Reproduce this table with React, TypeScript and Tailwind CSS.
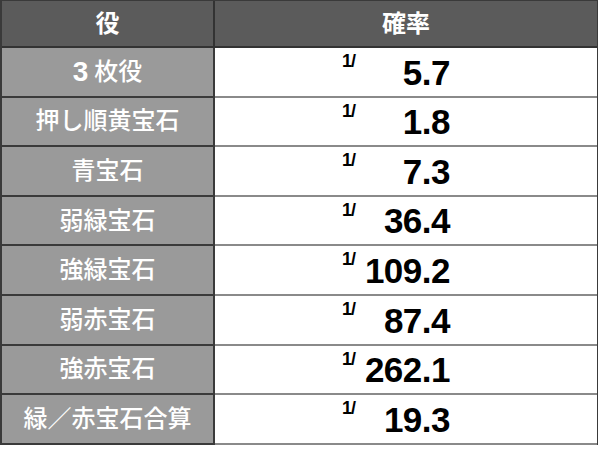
const rows: [string, string][] = [
  ["3 枚役", "5.7"],
  ["押し順黄宝石", "1.8"],
  ["青宝石", "7.3"],
  ["弱緑宝石", "36.4"],
  ["強緑宝石", "109.2"],
  ["弱赤宝石", "87.4"],
  ["強赤宝石", "262.1"],
  ["緑／赤宝石合算", "19.3"],
];

const jp = "font-['Liberation_Sans','Noto_Sans_CJK_JP',sans-serif]";

function Name({ text }: { text: string }) {
  // 先頭の数字だけ太字の欧文
  const m = text.match(/^(\d+)\s(.*)$/);
  if (!m) return <>{text}</>;
  return (
    <>
      <span className="font-bold text-[28px] mr-[6px]">{m[1]}</span>
      {m[2]}
    </>
  );
}

export default function App() {
  return (
    <div className="w-[600px] h-[455px] bg-white">
      <div className="w-[598px] border-l-2 border-r border-t border-[#3a3a3a]">
        <div className="flex h-[47px] bg-[#5b5b5b] border-b-2 border-[#333]">
          <div
            className={`w-[213px] border-r-2 border-[#333] flex items-center justify-center text-white text-[24px] font-bold ${jp}`}
          >
            役
          </div>
          <div
            className={`flex-1 flex items-center justify-center text-white text-[24px] font-bold ${jp}`}
          >
            確率
          </div>
        </div>
        {rows.map(([name, val]) => (
          <div key={name} className="flex h-[49.6px]">
            <div
              className={`w-[213px] bg-[#9a9a9a] border-r-2 border-b-2 border-[#3a3a3a] flex items-center justify-center text-white text-[24px] font-medium ${jp}`}
            >
              <Name text={name} />
            </div>
            <div className="flex-1 border-b-2 border-[#8a8a8a] pl-[127px]">
              <div className="w-[108px] h-full flex justify-between font-['Liberation_Sans',sans-serif] font-bold text-black">
                <span className="text-[18px] leading-none mt-[4px] tracking-[-1px]">1/</span>
                <span className="text-[35px] leading-none self-end mb-[6px] tracking-[-0.5px]">
                  {val}
                </span>
              </div>
            </div>
          </div>
        ))}
      </div>
    </div>
  );
}
